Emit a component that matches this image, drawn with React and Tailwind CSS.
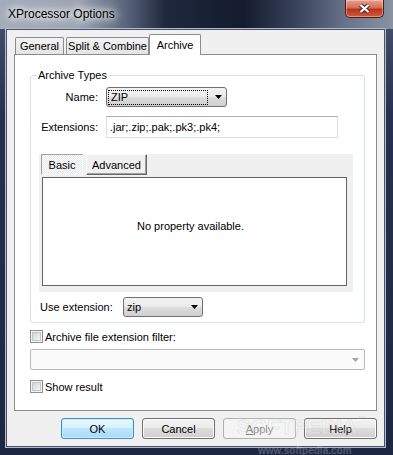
import React from 'react';

const F = "font-['Liberation_Sans',Arial,sans-serif]";
const BTN = 'bg-[linear-gradient(#f2f2f2,#ebebeb_50%,#dddddd_50%,#cfcfcf)]';

const Arrow = ({ color = '#000' }) => (
  <svg width="7" height="4" viewBox="0 0 7 4"><path d="M0 0h7L3.5 4z" fill={color} /></svg>
);

const Check = () => (
  <span className="w-[13px] h-[13px] shrink-0 border border-[#8e8f8f] bg-[#f4f4f4] p-[1px] flex">
    <span className="flex-1 border border-[#c2c5c9] bg-[linear-gradient(135deg,#d2d4d6,#f6f6f6)]" />
  </span>
);

const Button = ({ children, kind }) => {
  if (kind === 'default')
    return (
      <div className="w-[73px] h-[21px] rounded-[3px] border border-[#3c8fd0] bg-[linear-gradient(#eaf6fd,#d9f0fc_50%,#bee6fd_50%,#a7d9f5)] shadow-[inset_0_0_0_1px_#c6ecff] flex items-center justify-center">
        {children}
      </div>
    );
  if (kind === 'disabled')
    return (
      <div className="w-[73px] h-[21px] rounded-[3px] border border-[#adb2b5] bg-[#f4f4f4] text-[#838383] flex items-center justify-center">
        {children}
      </div>
    );
  return (
    <div className={`w-[73px] h-[21px] rounded-[3px] border border-[#707070] ${BTN} shadow-[inset_0_0_0_1px_#fbfbfb] flex items-center justify-center`}>
      {children}
    </div>
  );
};

export default function App() {
  return (
    <div className={`w-[393px] h-[455px] relative overflow-hidden flex flex-col bg-[linear-gradient(180deg,#4a5670_0%,#26324d_25%,#1c2742_100%)] ${F} text-[11px] leading-[14px] text-black`}>
      {/* title bar */}
      <div className="h-[29px] shrink-0 flex items-start bg-[linear-gradient(90deg,#a3acb9_0%,#9ba4b2_20%,#5a647a_32%,#1f283d_42%,#141b2d_62%,#3b455c_76%,#68728a_88%,#8a93a3_100%)]">
        <span className="ml-[8px] mt-[7px] text-[12px] leading-[15px] [text-shadow:0_0_6px_#fff,0_0_10px_#fff,0_0_14px_#fff]">XProcessor Options</span>
        <div className="ml-auto mr-[9px] w-[39px] h-[18px] rounded-b-[5px] border border-t-0 border-[#4a1d17] bg-[linear-gradient(#e8a391,#d36d58_45%,#ba321d_55%,#cf5a3e)] shadow-[inset_0_0_0_1px_rgba(255,220,210,0.45)] flex items-center justify-center">
          <svg width="13" height="11" viewBox="0 0 13 11">
            <path d="M2.5 2L10.5 9M10.5 2L2.5 9" stroke="#4b2a25" strokeWidth="4.2" />
            <path d="M2.5 2L10.5 9M10.5 2L2.5 9" stroke="#fff" strokeWidth="2.2" />
          </svg>
        </div>
      </div>

      {/* client */}
      <div className="flex-1 flex pl-[6px] pr-[8px] pb-[8px]">
        <div className="flex-1 flex flex-col bg-[#f0f0f0] border border-[#465270] shadow-[0_0_0_1px_#b4bdc9] px-[7px] pt-[4px] pb-[7px]">
          {/* tab strip */}
          <div className="h-[20px] flex items-end relative z-10">
            <div className="ml-[1px] w-[49px] h-[17px] border border-b-0 border-[#898c95] rounded-t-[2px] bg-[linear-gradient(#f3f3f3,#e4e4e4)] flex items-center justify-center">General</div>
            <div className="ml-[2px] w-[83px] h-[17px] border border-b-0 border-[#898c95] rounded-t-[2px] bg-[linear-gradient(#f3f3f3,#e4e4e4)] flex items-center justify-center">Split &amp; Combine</div>
            <div className="w-[52px] h-[21px] -mb-px border border-b-0 border-[#898c95] rounded-t-[2px] bg-white flex items-start justify-center pt-[3px]">Archive</div>
          </div>

          {/* tab page */}
          <div className="h-[357px] border border-[#898c95] bg-white flex flex-col pl-[15px] pr-[11px]">
            <fieldset className="mt-[13px] border border-[#d5dfe5] rounded-[3px] pl-[8px] pr-[11px] pb-[5px]">
              <legend className="ml-[-2px] px-[1px] leading-[14px]">Archive Types</legend>

              <div className="mt-[5px] h-[20px] flex items-center">
                <span className="w-[59px] text-right">Name:</span>
                <div className={`ml-[8px] w-[121px] h-[20px] border border-[#707070] rounded-[3px] ${BTN} flex items-center pl-[1px] pr-[4px]`}>
                  <div className="w-[100px] h-[15px] border border-dotted border-black flex items-center pl-[2px]">ZIP</div>
                  <span className="ml-auto flex"><Arrow /></span>
                </div>
              </div>

              <div className="mt-[9px] h-[22px] flex items-center">
                <span className="w-[59px] text-right">Extensions:</span>
                <div className="ml-[8px] w-[232px] h-[22px] border border-[#dbdfe6] border-t-[#abadb3] bg-white flex items-center pl-[3px]">.jar;.zip;.pak;.pk3;.pk4;</div>
              </div>

              <div className="mt-[16px] w-[314px] h-[138px] bg-[#f0f0f0] flex flex-col pl-[2px]">
                <div className="h-[21px] flex gap-[3px]">
                  <div className="w-[42px] h-[21px] border border-[#a0a0a0] border-r-[#f8f8f8] border-b-[#f8f8f8] bg-[repeating-conic-gradient(#ffffff_0_25%,#e6e6e6_0_50%)] bg-[length:2px_2px] flex items-center justify-center">Basic</div>
                  <div className="w-[61px] h-[21px] border border-white border-r-[#696969] border-b-[#696969] shadow-[inset_-1px_-1px_0_#a0a0a0] bg-[#f0f0f0] flex items-center justify-center">Advanced</div>
                </div>
                <div className="mt-[2px] ml-[1px] w-[305px] h-[109px] border border-[#646464] bg-white flex justify-center pt-[41px] pr-[8px]">
                  No property available.
                </div>
              </div>

              <div className="mt-[5px] h-[20px] flex items-center">
                <span className="w-[84px] pl-[1px]">Use extension:</span>
                <div className={`w-[80px] h-[20px] border border-[#707070] rounded-[3px] ${BTN} flex items-center pl-[3px] pr-[4px]`}>
                  <span>zip</span>
                  <span className="ml-auto flex"><Arrow /></span>
                </div>
              </div>
            </fieldset>

            <div className="mt-[7px] h-[13px] flex items-center gap-[2px]">
              <Check />
              <span>Archive file extension filter:</span>
            </div>

            <div className="mt-[6px] h-[21px] border border-[#b5b8bc] rounded-[2px] bg-[#fbfbfb] flex items-center justify-end pr-[5px]">
              <Arrow color="#a3a3a3" />
            </div>

            <div className="mt-[10px] h-[13px] flex items-center gap-[2px]">
              <Check />
              <span>Show result</span>
            </div>
          </div>

          {/* buttons */}
          <div className="mt-[7px] h-[21px] flex justify-end gap-[8px]">
            <Button kind="default">OK</Button>
            <Button>Cancel</Button>
            <Button kind="disabled"><span><span className="underline">A</span>pply</span></Button>
            <Button>Help</Button>
          </div>
        </div>
      </div>

      {/* watermark */}
      <div className="absolute left-[237px] top-[415px] text-[21px] leading-[24px] font-bold text-[rgba(255,255,255,0.2)] [-webkit-text-stroke:1px_rgba(190,190,190,0.25)] pointer-events-none">
        SOFTPEDIA
      </div>
      <div className="absolute left-[358px] top-[415px] text-[7px] leading-[8px] text-[rgba(160,160,160,0.35)] pointer-events-none">™</div>
      <div className="absolute left-[258px] top-[446px] text-[10px] leading-[10px] font-bold text-[rgba(255,255,255,0.25)] pointer-events-none">www.softpedia.com</div>
    </div>
  );
}
